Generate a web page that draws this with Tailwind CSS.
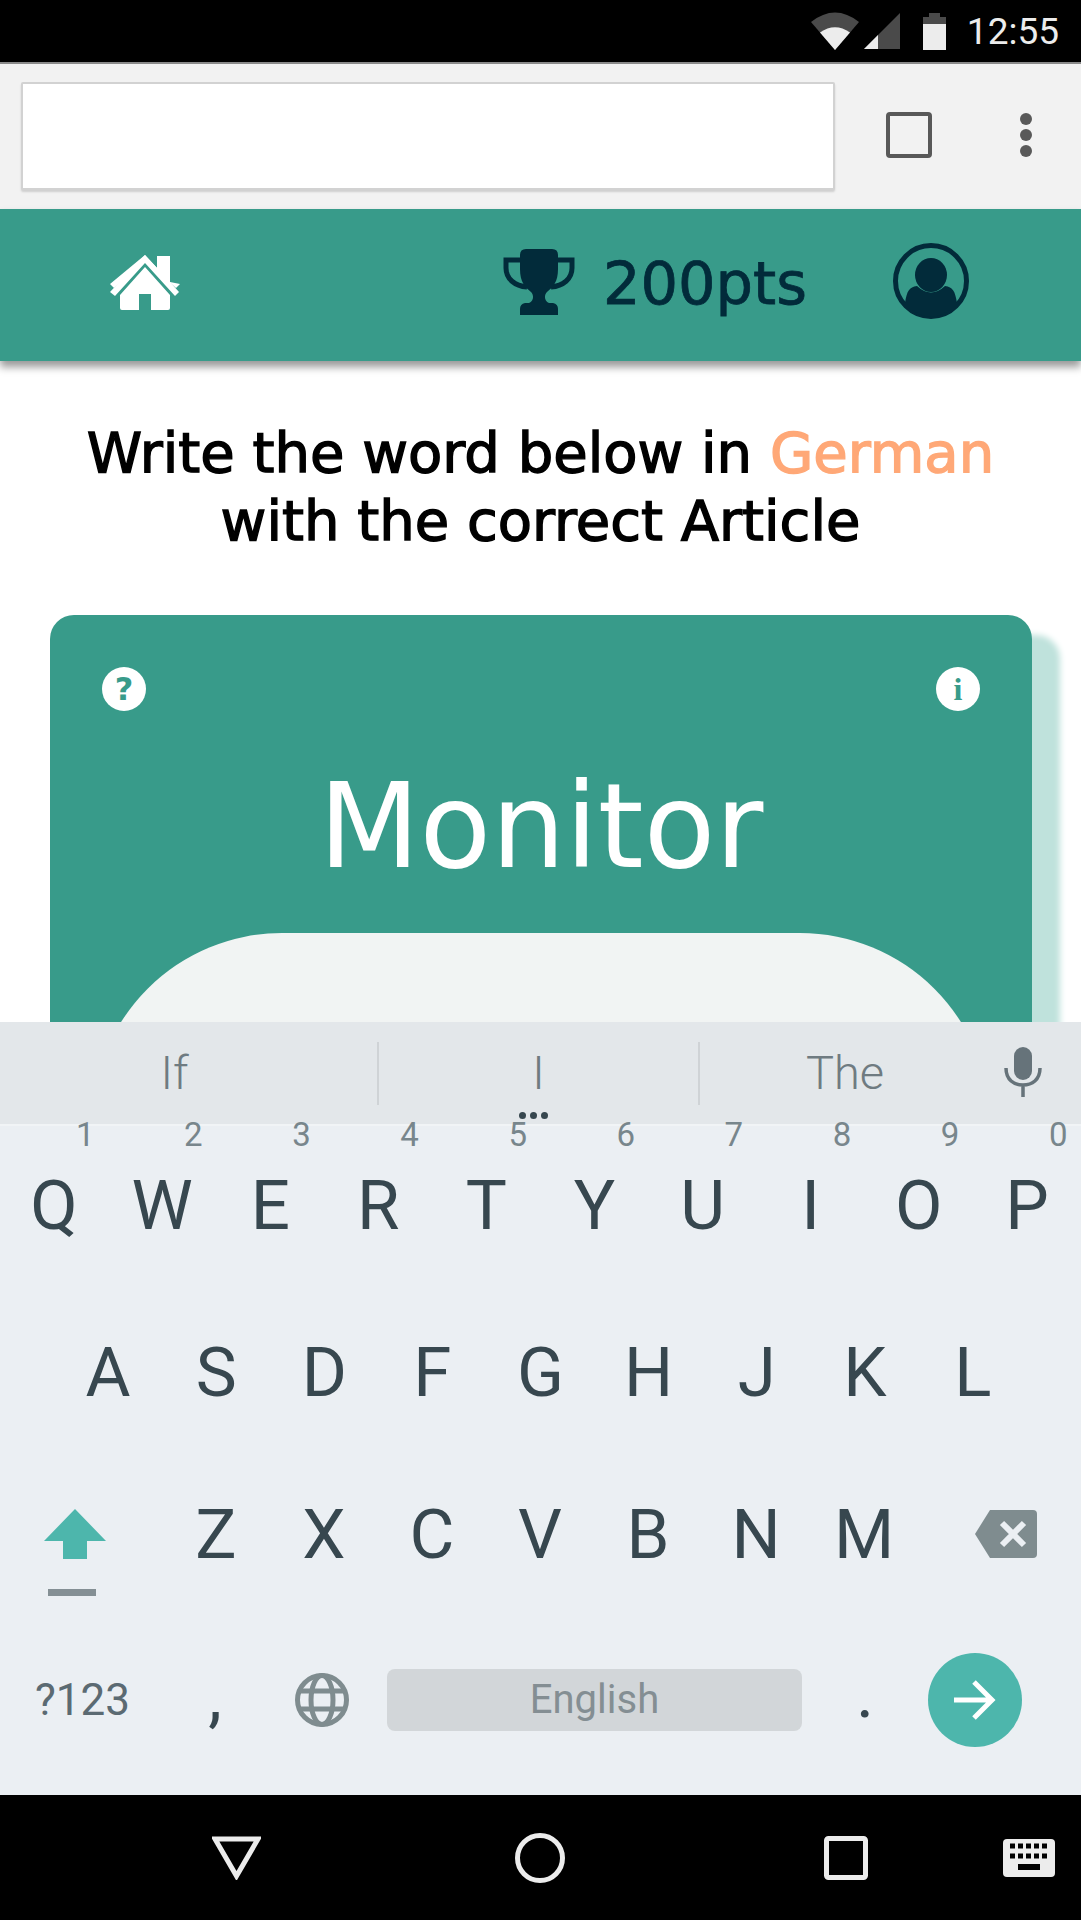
<!DOCTYPE html>
<html>
  <head>
    <title>word-quiz</title>
    <meta charset="UTF-8" />
    <script src="https://cdn.jsdelivr.net/npm/@tailwindcss/browser@4"></script>
  </head>
  <body class="bg-white">
    <div class="w-[1081px] h-[1920px] flex flex-col overflow-hidden font-['Roboto',sans-serif]">
      <!-- status bar -->
      <div class="h-[62px] shrink-0 bg-black flex items-center justify-end pr-[22px] text-[37px] text-[#ececec]">
        <svg class="mr-[5px]" width="48" height="38" viewBox="0 0 48 38">
          <path d="M0 10 Q24 -9 48 10 L24 38 Z" fill="#4a4a4a" />
          <path d="M9 20.500 Q24 10 39 20.500 L24 38 Z" fill="#ececec" />
        </svg>
        <svg class="mr-[22px]" width="36" height="36" viewBox="0 0 36 36">
          <path d="M36 0 V36 H0 Z" fill="#4a4a4a" />
          <path d="M14 22 V36 H0 Z" fill="#ececec" />
        </svg>
        <svg class="mr-[20px]" width="25" height="38" viewBox="0 0 25 38">
          <path d="M1 5 H7 V1 H18 V5 H24 V12 H1 Z" fill="#4a4a4a" />
          <rect x="1" y="12" width="23" height="26" fill="#ececec" />
        </svg>
        <span class="leading-none">12:55</span>
      </div>

      <!-- browser bar -->
      <div class="h-[147px] shrink-0 bg-[#f2f2f2] border-t-2 border-[#8a8a8a] flex items-center pl-[21px]">
        <div class="w-[814px] h-[108px] bg-white border-2 border-[#d2d2d2] rounded-[2px] shadow-[0_2px_2px_#cfcfcf] -mt-[2px]"></div>
        <div class="w-[46px] h-[46px] ml-[51px] border-[4px] border-[#595959] rounded-[4px] -mt-[4px]"></div>
        <div class="ml-[88px] flex flex-col gap-[4px] -mt-[4px]">
          <div class="w-[12px] h-[12px] rounded-full bg-[#595959]"></div>
          <div class="w-[12px] h-[12px] rounded-full bg-[#595959]"></div>
          <div class="w-[12px] h-[12px] rounded-full bg-[#595959]"></div>
        </div>
      </div>

      <!-- app header -->
      <div class="h-[152px] shrink-0 bg-[#389b8a] shadow-[0_6px_8px_rgba(0,0,0,0.4)] relative z-10 flex items-center pl-[110px] text-[#022b3a] font-['DejaVu_Sans',sans-serif]">
        <svg class="-mt-[5px]" width="70" height="56" viewBox="0 0 70 56">
          <path d="M35 0 L47 13 V1 H60 V27 L70 29 L66 33 L35 6 L4 33 L0 29 Z" fill="#fff" />
          <path d="M35 0 L48 14 V1 H60 V27 L69 37 L65 41 L35 8 L5 41 L0 37 Z" fill="#fff" />
          <path d="M35 12 L60 40 V53 Q60 55 58 55 H41 V39 H29 V55 H12 Q10 55 10 53 V40 Z" fill="#fff" />
        </svg>
        <svg class="ml-[323px] -mt-[7px]" width="72" height="66" viewBox="0 0 72 66">
          <path d="M17 11 H3 V19 C3 30 12 37 24 38 M55 11 H69 V19 C69 30 60 37 48 38" fill="none" stroke="#022b3a" stroke-width="5" />
          <path d="M17 6 Q17 0 23 0 H49 Q55 0 55 6 V20 C55 33 50 38 44 43 C41 46 41 52 46 54 H50 Q55 55 55 60 V66 H17 V60 Q17 55 22 54 H26 C31 52 31 46 28 43 C22 38 17 33 17 20 Z" fill="#022b3a" />
        </svg>
        <span class="ml-[28px] text-[59px] leading-none -mt-[4px] [-webkit-text-stroke:0.8px_#022b3a]">200pts</span>
        <svg class="ml-[86px] -mt-[8px]" width="76" height="76" viewBox="0 0 76 76">
          <circle cx="38" cy="38" r="35.500" fill="none" stroke="#022b3a" stroke-width="5" />
          <ellipse cx="38" cy="32" rx="16" ry="17" fill="#022b3a" />
          <path d="M12 60 C14 48 16 44 24 43 Q38 56 52 43 C60 44 62 48 64 60 Q38 88 12 60 Z" fill="#022b3a" />
        </svg>
      </div>

      <!-- quiz page, runs under the keyboard -->
      <div class="h-[661px] shrink-0 overflow-hidden bg-white font-['DejaVu_Sans',sans-serif]">
        <h1 class="pt-[58px] text-center text-[56px] leading-[68px] text-black font-normal [-webkit-text-stroke:1.4px_#000]">
          Write the word below in
          <span class="text-[#ffa877] [-webkit-text-stroke:1.4px_#ffa877]">German</span><br />
          with the correct Article
        </h1>
        <div class="mt-[60px] ml-[50px] w-[982px] h-[700px] bg-[#389b8a] rounded-[24px] shadow-[28px_20px_6px_#bfe2dc] px-[52px] pt-[52px]">
          <div class="flex justify-between">
            <div class="w-[44px] h-[44px] rounded-full bg-white flex items-center justify-center text-[32px] leading-none font-bold text-[#389b8a]">?</div>
            <div class="w-[44px] h-[44px] rounded-full bg-white flex items-center justify-center text-[32px] leading-none font-bold text-[#389b8a] font-['Liberation_Serif',serif]">i</div>
          </div>
          <div class="mt-[46px] text-center text-white text-[117px] leading-[140px]">Monitor</div>
          <div class="mt-[36px] -mx-[10px] h-[400px] bg-[#f1f4f3] rounded-[190px]"></div>
        </div>
      </div>

      <!-- suggestion strip -->
      <div class="h-[102px] shrink-0 bg-[#e3e7ea] relative flex text-[47px] text-[#6f7b81] font-light">
        <div class="w-[379px] h-[63px] mt-[20px] border-r-2 border-[#cfd3d6] flex items-center justify-center pl-[-20px]">
          <span class="ml-[-28px]">If</span>
        </div>
        <div class="w-[321px] h-[63px] mt-[20px] border-r-2 border-[#cfd3d6] flex items-center justify-center">I</div>
        <div class="w-[290px] h-[63px] mt-[20px] flex items-center justify-center">The</div>
        <svg class="mt-[25px] ml-[14px]" width="38" height="50" viewBox="0 0 38 50">
          <rect x="10" y="0" width="18" height="33" rx="9" fill="#66737a" />
          <path d="M2 21 C2 33 10 38 19 38 C28 38 36 33 36 21 M19 38 V50" fill="none" stroke="#66737a" stroke-width="3.500" />
        </svg>
        <div class="absolute left-[519px] top-[90px] flex gap-[4px]">
          <div class="w-[7px] h-[7px] rounded-full bg-[#37474f]"></div>
          <div class="w-[7px] h-[7px] rounded-full bg-[#37474f]"></div>
          <div class="w-[7px] h-[7px] rounded-full bg-[#37474f]"></div>
        </div>
      </div>

      <!-- keyboard -->
      <div class="h-[671px] shrink-0 bg-[#ebeff3] border-t-2 border-[#f1f4f6] text-[69px] leading-none text-[#37474f] font-normal">
        <div class="h-[158px] grid grid-cols-10 items-center text-center">
          <div class="relative">Q<sup class="absolute left-[76px] -top-[36px] text-[33px] text-[#78868c]">1</sup></div>
          <div class="relative">W<sup class="absolute left-[76px] -top-[36px] text-[33px] text-[#78868c]">2</sup></div>
          <div class="relative">E<sup class="absolute left-[76px] -top-[36px] text-[33px] text-[#78868c]">3</sup></div>
          <div class="relative">R<sup class="absolute left-[76px] -top-[36px] text-[33px] text-[#78868c]">4</sup></div>
          <div class="relative">T<sup class="absolute left-[76px] -top-[36px] text-[33px] text-[#78868c]">5</sup></div>
          <div class="relative">Y<sup class="absolute left-[76px] -top-[36px] text-[33px] text-[#78868c]">6</sup></div>
          <div class="relative">U<sup class="absolute left-[76px] -top-[36px] text-[33px] text-[#78868c]">7</sup></div>
          <div class="relative">I<sup class="absolute left-[76px] -top-[36px] text-[33px] text-[#78868c]">8</sup></div>
          <div class="relative">O<sup class="absolute left-[76px] -top-[36px] text-[33px] text-[#78868c]">9</sup></div>
          <div class="relative">P<sup class="absolute left-[76px] -top-[36px] text-[33px] text-[#78868c]">0</sup></div>
        </div>
        <div class="h-[176px] px-[54px] grid grid-cols-9 items-center text-center">
          <div>A</div><div>S</div><div>D</div><div>F</div><div>G</div><div>H</div><div>J</div><div>K</div><div>L</div>
        </div>
        <div class="h-[148px] flex items-center text-center relative">
          <div class="w-[162px] pl-[44px]">
            <svg width="62" height="50" viewBox="0 0 62 50"><path d="M31 0 L62 32 H43 V50 H19 V32 H0 Z" fill="#4db6ac" /></svg>
          </div>
          <div class="w-[108px]">Z</div><div class="w-[108px]">X</div><div class="w-[108px]">C</div><div class="w-[108px]">V</div><div class="w-[108px]">B</div><div class="w-[108px]">N</div><div class="w-[108px]">M</div>
          <svg class="ml-[57px]" width="62" height="48" viewBox="0 0 62 48">
            <path d="M15 0 H58 Q62 0 62 4 V44 Q62 48 58 48 H15 L0 24 Z" fill="#7f8c8f" />
            <path d="M27 13 L49 35 M49 13 L27 35" stroke="#ebeff3" stroke-width="6" />
          </svg>
          <div class="absolute left-[48px] top-[129px] w-[48px] h-[7px] bg-[#848f94]"></div>
        </div>
        <div class="h-[184px] flex items-center">
          <div class="w-[165px] pl-[35px] text-[44px] text-[#5b6a72]">?123</div>
          <div class="w-[100px] text-center text-[69px] -mt-[10px]">,</div>
          <svg class="ml-[30px]" width="54" height="54" viewBox="0 0 54 54" fill="none" stroke="#7f8c8f" stroke-width="5">
            <circle cx="27" cy="27" r="24.500" />
            <ellipse cx="27" cy="27" rx="11" ry="24.500" />
            <path d="M4 18 H50 M4 36 H50" />
          </svg>
          <div class="ml-[38px] w-[415px] h-[62px] rounded-[8px] bg-[#d2d6d9] flex items-center justify-center text-[40px] text-[#848e93]">English</div>
          <div class="w-[126px] text-center text-[69px] -mt-[14px]">.</div>
          <div class="w-[94px] h-[94px] rounded-full bg-[#4db6ac] flex items-center justify-center">
            <svg width="42" height="40" viewBox="0 0 42 40" fill="none" stroke="#fff" stroke-width="5">
              <path d="M0 20 H38 M20 2 L38 20 L20 38" />
            </svg>
          </div>
        </div>
      </div>

      <!-- nav bar -->
      <div class="flex-1 bg-black flex items-center pl-[212px]">
        <svg width="49" height="44" viewBox="0 0 49 44" fill="none" stroke="#ececec" stroke-width="5"><path d="M3 3 H46 L24.500 40 Z" /></svg>
        <svg class="ml-[254px]" width="50" height="50" viewBox="0 0 50 50" fill="none" stroke="#ececec" stroke-width="5"><circle cx="25" cy="25" r="22.500" /></svg>
        <svg class="ml-[259px]" width="44" height="44" viewBox="0 0 44 44" fill="none" stroke="#ececec" stroke-width="5"><rect x="2.500" y="2.500" width="39" height="39" rx="2" /></svg>
        <svg class="ml-[135px]" width="52" height="38" viewBox="0 0 52 38">
          <rect width="52" height="38" rx="4" fill="#ececec" />
          <path d="M7 7 H45 M7 17 H45" stroke="#000" stroke-width="5" stroke-dasharray="5 3" />
          <rect x="15" y="25" width="22" height="6" fill="#000" />
        </svg>
      </div>
    </div>
  </body>
</html>
